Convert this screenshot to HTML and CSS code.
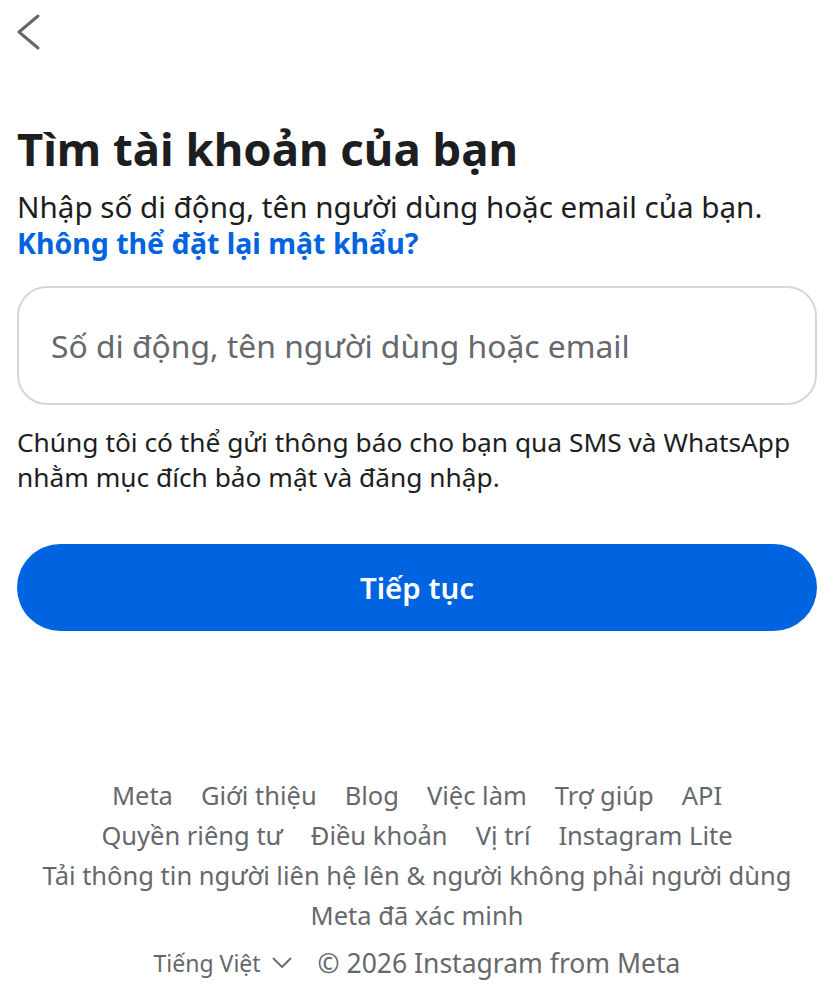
FILE: index.html
```html
<!DOCTYPE html>
<html lang="vi">
<head>
    <meta charset="UTF-8">
    <meta name="viewport" content="width=device-width, initial-scale=1.0">
    <title>Tìm tài khoản của bạn</title>
    <link rel="stylesheet" href="styles.css">
</head>
<body>
    <div class="page">
        <a class="back" href="#" aria-label="Quay lại">
            <svg width="24" height="36" viewBox="0 0 24 36">
                <path d="M21 2 L2 18 L21 34" fill="none" stroke="#65686c" stroke-width="3" stroke-linecap="round" stroke-linejoin="round"/>
            </svg>
        </a>

        <h1>Tìm tài khoản của bạn</h1>
        <p class="lead">Nhập số di động, tên người dùng hoặc email của bạn.</p>
        <a class="link" href="#">Không thể đặt lại mật khẩu?</a>

        <input class="field" type="text" placeholder="Số di động, tên người dùng hoặc email">

        <p class="note">Chúng tôi có thể gửi thông báo cho bạn qua SMS và WhatsApp nhằm mục đích bảo mật và đăng nhập.</p>

        <button class="primary">Tiếp tục</button>

        <div class="footer">
            <div class="row">
                <a href="#">Meta</a>
                <a href="#">Giới thiệu</a>
                <a href="#">Blog</a>
                <a href="#">Việc làm</a>
                <a href="#">Trợ giúp</a>
                <a href="#">API</a>
            </div>
            <div class="row">
                <a href="#">Quyền riêng tư</a>
                <a href="#">Điều khoản</a>
                <a href="#">Vị trí</a>
                <a href="#">Instagram Lite</a>
            </div>
            <div class="row">
                <a href="#">Tải thông tin người liên hệ lên &amp; người không phải người dùng</a>
            </div>
            <div class="row">
                <a href="#">Meta đã xác minh</a>
            </div>
            <div class="row bottom">
                <span class="lang">Tiếng Việt
                    <svg width="20" height="12" viewBox="0 0 20 12">
                        <path d="M1.5 1.5 L10 10 L18.5 1.5" fill="none" stroke="#65686c" stroke-width="1.8" stroke-linecap="round" stroke-linejoin="round"/>
                    </svg>
                </span>
                <span class="copy">© 2026 Instagram from Meta</span>
            </div>
        </div>
    </div>
</body>
</html>
```

FILE: styles.css
```css
body {
    margin: 0;
    background-color: #fff;
    color: #1c1e21;
    font-family: "Noto Sans", "Liberation Sans", sans-serif;
}
.page {
    padding: 14px 16px 0 17px;
    display: flex;
    flex-direction: column;
}
.back {
    display: block;
    width: 24px;
    height: 36px;
    margin-bottom: 70px;
}
h1 {
    margin: 0;
    font-size: 45.5px;
    line-height: 56px;
    font-weight: 700;
    color: #1c1e21;
}
.lead {
    margin: 13px 0 0;
    font-size: 29.6px;
    line-height: 36px;
}
.link {
    color: #0064e0;
    font-size: 28.5px;
    line-height: 36px;
    font-weight: 700;
    text-decoration: none;
}
.field {
    margin-top: 25px;
    height: 119px;
    box-sizing: border-box;
    border: 2px solid #d4d6d9;
    border-radius: 30px;
    padding: 0 32px;
    font-family: inherit;
    font-size: 31.8px;
    color: #1c1e21;
    outline: none;
}
.field::placeholder {
    color: #65686c;
}
.note {
    margin: 20px 0 0;
    font-size: 26.3px;
    line-height: 35px;
}
.primary {
    margin-top: 49px;
    height: 87px;
    border: none;
    border-radius: 44px;
    background-color: #0064e0;
    color: #fff;
    font-family: inherit;
    font-size: 29.5px;
    font-weight: 600;
    cursor: pointer;
}
.footer {
    margin-top: 144px;
    display: flex;
    flex-direction: column;
    align-items: center;
    color: #65686c;
    font-size: 25.5px;
    line-height: 40px;
}
.row {
    display: flex;
    flex-wrap: wrap;
    justify-content: center;
    gap: 0 28px;
}
.row a {
    color: #65686c;
    text-decoration: none;
}
.bottom {
    margin-top: 8px;
    align-items: center;
    gap: 0 26px;
}
.lang {
    font-size: 23px;
    display: flex;
    align-items: center;
    gap: 11px;
}
.copy {
    font-size: 26.5px;
}
```
